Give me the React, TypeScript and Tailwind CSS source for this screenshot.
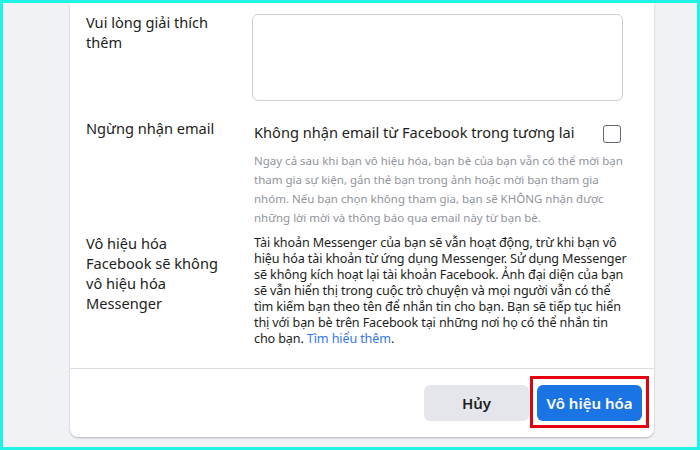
const FONT = "font-['Noto_Sans','Open_Sans',sans-serif]";

const MESSENGER_LINES = [
  "Tài khoản Messenger của bạn sẽ vẫn hoạt động, trừ khi bạn vô",
  "hiệu hóa tài khoản từ ứng dụng Messenger. Sử dụng Messenger",
  "sẽ không kích hoạt lại tài khoản Facebook. Ảnh đại diện của bạn",
  "sẽ vẫn hiển thị trong cuộc trò chuyện và mọi người vẫn có thể",
  "tìm kiếm bạn theo tên để nhắn tin cho bạn. Bạn sẽ tiếp tục hiển",
  "thị với bạn bè trên Facebook tại những nơi họ có thể nhắn tin",
];

function FieldRow({ label, children, className = "" }: { label: string; children: React.ReactNode; className?: string }) {
  return (
    <div className={`flex ${className}`}>
      <div className="w-[166px] shrink-0 pr-4 text-[14.6px] leading-[20px] text-[#1c1e21]">{label}</div>
      <div className="w-[390px]">{children}</div>
    </div>
  );
}

export default function App() {
  return (
    <div className={`${FONT} w-[700px] h-[450px] overflow-hidden border-[3px] border-[#1ff3e5] bg-[#f0f2f5] flex`}>
      <div className="ml-[67px] w-[584px] h-[434px] bg-white rounded-b-lg shadow-[0_1px_2px_rgba(0,0,0,0.25)] flex flex-col">
        <div className="flex-1 pl-4 pt-[9px]">
          <FieldRow label="Vui lòng giải thích thêm">
            <textarea className="mt-[2px] block w-[371px] h-[87px] resize-none rounded-md border border-[#ccd0d5] outline-none" />
          </FieldRow>

          <FieldRow label="Ngừng nhận email" className="mt-[17px]">
            <div className="pl-[2px] w-[371px]">
              <label className="flex items-center justify-between pt-[3px]">
                <span className="text-[14.6px] leading-[22px] text-[#1c1e21]">Không nhận email từ Facebook trong tương lai</span>
                <span className="mt-[3px] w-[18px] h-[18px] rounded-[3px] border border-[#606770] bg-white mr-[2px]" />
              </label>
              <p className="mt-[8px] text-[11.5px] leading-[19px] text-[#90949c]">
                Ngay cả sau khi bạn vô hiệu hóa, bạn bè của bạn vẫn có thể mời bạn tham gia sự kiện, gắn thẻ bạn trong ảnh hoặc mời bạn tham gia nhóm. Nếu bạn chọn không tham gia, bạn sẽ KHÔNG nhận được những lời mời và thông báo qua email này từ bạn bè.
              </p>
            </div>
          </FieldRow>

          <FieldRow label="Vô hiệu hóa Facebook sẽ không vô hiệu hóa Messenger" className="mt-[6px]">
            <p className="mt-[2px] pl-[2px] text-[12.6px] leading-[16px] tracking-[-0.01em] text-[#1c1e21] whitespace-nowrap">
              {MESSENGER_LINES.map((line) => (
                <span key={line} className="block">{line}</span>
              ))}
              <span className="block">
                cho bạn. <a className="text-[#3578e5]">Tìm hiểu thêm</a>.
              </span>
            </p>
          </FieldRow>
        </div>

        <div className="border-t border-[#dadde1] flex justify-end items-center gap-2 pr-3 pt-4 pb-4">
          <button className="w-[105px] h-9 rounded-md bg-[#e4e6eb] text-[15px] font-semibold text-[#1c1e21]">Hủy</button>
          <button className="relative w-[105px] h-9 rounded-md bg-[#1b74e4] text-[15px] font-semibold text-white">
            Vô hiệu hóa
            <span className="absolute -left-[7px] -right-[7px] -top-[9px] -bottom-[7px] border-[3px] border-[#e4000f]" />
          </button>
        </div>
      </div>
    </div>
  );
}
